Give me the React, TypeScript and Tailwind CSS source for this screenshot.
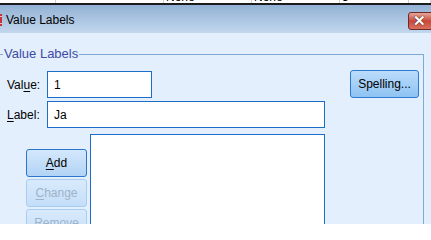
import React from 'react';

const font = { fontFamily: '"Liberation Sans", Arial, sans-serif' };

const Mn = ({ text, at }: { text: string; at: number }) => (
  <>
    {text.slice(0, at)}
    <span className="underline underline-offset-2">{text[at]}</span>
    {text.slice(at + 1)}
  </>
);

const DialogButton = ({
  children,
  disabled,
  className = '',
}: {
  children: React.ReactNode;
  disabled?: boolean;
  className?: string;
}) => (
  <button
    disabled={disabled}
    className={
      'flex h-[28px] items-center justify-center rounded-[3px] border text-[12px] ' +
      (disabled
        ? 'border-[#a8cdf2] bg-gradient-to-b from-[#d9eafc] to-[#c4def8] text-[#9db3c9]'
        : 'border-[#2a76cc] bg-gradient-to-b from-[#d4e8fc] to-[#b2d3f5] text-black') +
      ' ' +
      className
    }
  >
    {children}
  </button>
);

// the grid behind the dialog, mostly hidden
const GridStrip = () => {
  const cols = [
    { w: 56, text: '' },
    { w: 108, text: '' },
    { w: 88, text: 'None' },
    { w: 88, text: 'None' },
    { w: 69, text: '3' },
    { w: 22, text: '═' },
  ];
  return (
    <div className="flex h-[3px] overflow-hidden bg-white">
      {cols.map((c, i) => (
        <div
          key={i}
          className="shrink-0 border-r border-[#cfcfcf] pl-[2px] text-[12px] leading-[12px] text-black"
          style={{ width: c.w }}
        >
          <div className="mt-[-9px]">{c.text}</div>
        </div>
      ))}
      <div className="w-[4px] shrink-0 bg-[#f3d27a]" />
    </div>
  );
};

const App = () => {
  return (
    <div className="h-[224px] w-[431px] overflow-hidden bg-[#e3effd]" style={font}>
      <GridStrip />
      <div className="h-[2px] bg-[#1c1c1c]" />

      {/* title bar */}
      <div className="flex h-[28px] items-center bg-gradient-to-b from-[#93b2d4] to-[#c2d7ee]">
        <div className="mt-[1px] flex h-[12px] w-[2px] flex-col justify-between bg-[#c8323c] py-[2px]">
          <div className="h-[1px] bg-[#f3b8b8]" />
          <div className="h-[1px] bg-[#f3b8b8]" />
        </div>
        <span className="ml-[4px] mt-[1px] text-[12px] text-black">Value Labels</span>
        <div className="ml-auto mr-[-8px] mt-[3px] flex h-[18px] w-[31px] items-center justify-center rounded-[3px] border border-[#6e2a2a] bg-gradient-to-b from-[#e6a699] via-[#c8473a] to-[#d9705f]">
          <span
            className="mr-[8px] text-[15px] font-bold leading-none text-white"
            style={{ textShadow: '0 0 1px #3a1a1a, 0 0 1px #3a1a1a' }}
          >
            ✕
          </span>
        </div>
      </div>

      {/* group box */}
      <div className="relative mt-[21px] w-[424px] border-r border-t border-[#82a8d6] pb-[40px]">
        <span className="absolute left-[3px] top-[-9px] bg-[#e3effd] px-[1px] text-[13px] leading-[16px] text-[#3f4aa6]">
          Value Labels
        </span>

        <div className="mt-[15px] flex items-start">
          <label className="w-[47px] pl-[7px] pt-[6px] text-[12px] text-black">
            <Mn text="Value:" at={3} />
          </label>
          <div className="mt-[1px] flex h-[27px] w-[105px] items-center border border-[#1b6ec8] bg-white pl-[6px] text-[12px] text-black">
            1
          </div>
          <button className="ml-auto mr-[4px] flex h-[28px] w-[69px] items-center justify-center rounded-[3px] border border-[#2c7ad2] bg-gradient-to-b from-[#bcdcfb] to-[#8ec3f2] text-[12px] text-black">
            Spelling...
          </button>
        </div>

        <div className="mt-[3px] flex items-center">
          <label className="w-[47px] pl-[7px] text-[12px] text-black">
            <Mn text="Label:" at={0} />
          </label>
          <div className="flex h-[27px] w-[278px] items-center border border-[#1b6ec8] bg-white pl-[6px] text-[12px] text-black">
            Ja
          </div>
        </div>

        <div className="mt-[6px] flex items-start">
          <div className="ml-[26px] flex w-[61px] flex-col gap-[2px] pt-[15px]">
            <DialogButton>
              <Mn text="Add" at={0} />
            </DialogButton>
            <DialogButton disabled>
              <Mn text="Change" at={0} />
            </DialogButton>
            <DialogButton disabled>
              <Mn text="Remove" at={0} />
            </DialogButton>
          </div>
          <div className="ml-[3px] h-[130px] w-[235px] border border-[#1b6ec8] bg-white" />
        </div>
      </div>
    </div>
  );
};

export default App;
